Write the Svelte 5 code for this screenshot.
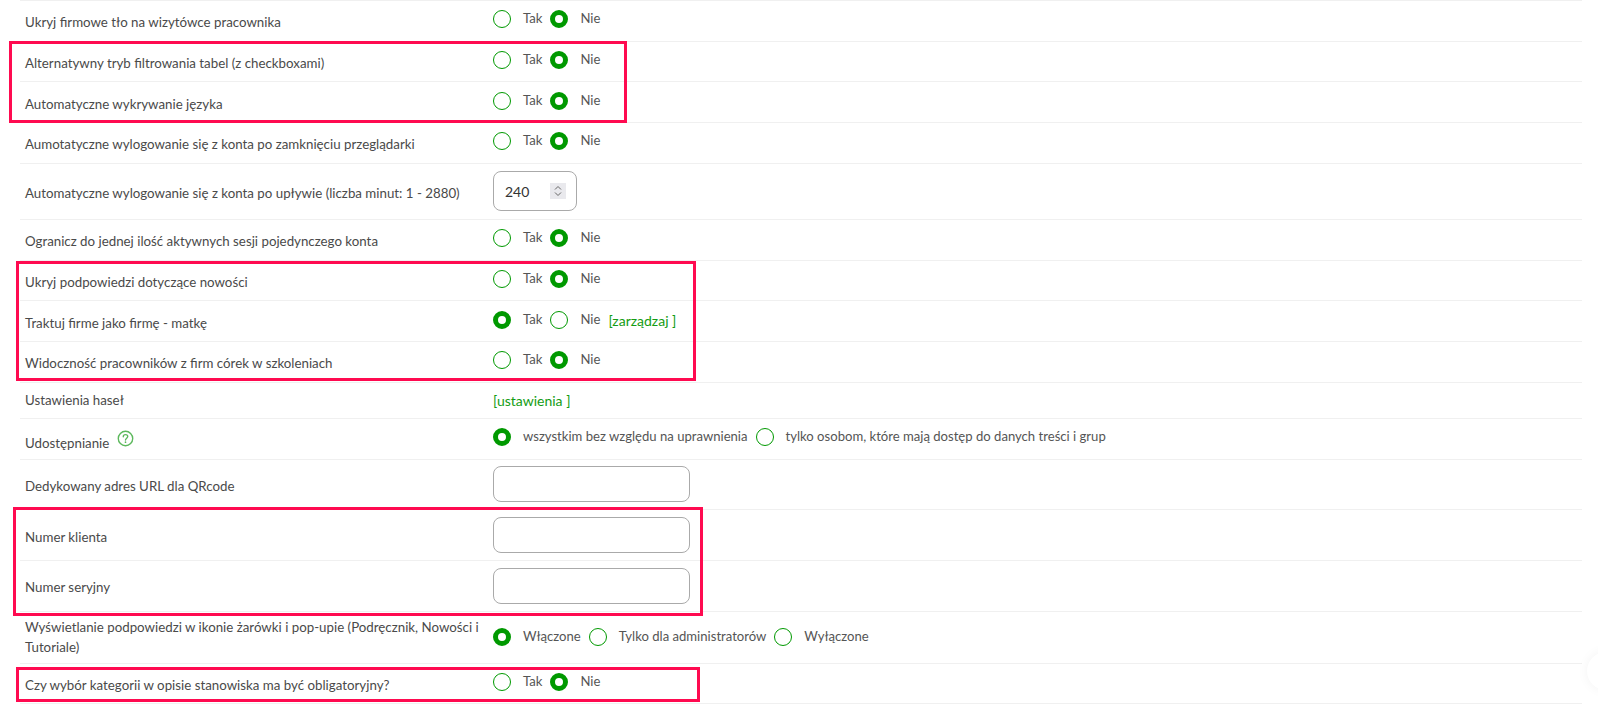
<script>
  const taknie = (sel = 1) => ({ type: 'radio', options: ['Tak', 'Nie'], sel });

  const rows = [
    { label: 'Ukryj firmowe tło na wizytówce pracownika', ...taknie() },
    { label: 'Alternatywny tryb filtrowania tabel (z checkboxami)', ...taknie() },
    { label: 'Automatyczne wykrywanie języka', ...taknie() },
    { label: 'Aumotatyczne wylogowanie się z konta po zamknięciu przeglądarki', ...taknie() },
    { label: 'Automatyczne wylogowanie się z konta po upływie (liczba minut: 1 - 2880)', type: 'number', value: '240' },
    { label: 'Ogranicz do jednej ilość aktywnych sesji pojedynczego konta', ...taknie() },
    { label: 'Ukryj podpowiedzi dotyczące nowości', ...taknie() },
    { label: 'Traktuj firme jako firmę - matkę', ...taknie(0), link: '[zarządzaj ]' },
    { label: 'Widoczność pracowników z firm córek w szkoleniach', ...taknie() },
    { label: 'Ustawienia haseł', type: 'link', link: '[ustawienia ]' },
    { label: 'Udostępnianie', help: true, type: 'radio', sel: 0, options: ['wszystkim bez względu na uprawnienia', 'tylko osobom, które mają dostęp do danych treści i grup'] },
    { label: 'Dedykowany adres URL dla QRcode', type: 'text' },
    { label: 'Numer klienta', type: 'text' },
    { label: 'Numer seryjny', type: 'text' },
    { label: 'Wyświetlanie podpowiedzi w ikonie żarówki i pop-upie (Podręcznik, Nowości i Tutoriale)', type: 'radio', sel: 0, tall: true, options: ['Włączone', 'Tylko dla administratorów', 'Wyłączone'] },
    { label: 'Czy wybór kategorii w opisie stanowiska ma być obligatoryjny?', ...taknie() }
  ];

  // red annotations drawn on top of the form
  const marks = [
    { x: 9, y: 41, w: 618, h: 82 },
    { x: 16, y: 261, w: 680, h: 120 },
    { x: 13, y: 507, w: 690, h: 109 },
    { x: 16, y: 667, w: 684, h: 35 }
  ];
</script>

<div class="page">
  <div class="list">
    {#each rows as row, i}
      <div class="row row-{row.type}" class:tall={row.tall} class:has-help={row.help}>
        <div class="label">
          {row.label}
          {#if row.help}
            <svg class="help" width="17" height="17" viewBox="0 0 16 16" fill="none">
              <circle cx="8" cy="8" r="6.8" stroke="#5cb85c" stroke-width="1.3" />
              <path d="M5.9 6.3c0-1.2 1-2 2.1-2s2.1.8 2.1 1.9c0 1.5-2.1 1.7-2.1 3.3" stroke="#5cb85c" stroke-width="1.3" stroke-linecap="round" />
              <circle cx="8" cy="11.5" r=".8" fill="#5cb85c" />
            </svg>
          {/if}
        </div>
        <div class="control">
          {#if row.type === 'radio'}
            {#each row.options as opt, j}
              <input type="radio" name={'r' + i} checked={row.sel === j} />
              <span class="opt">{opt}</span>
            {/each}
            {#if row.link}
              <a href="#top" class="link inline">{row.link}</a>
            {/if}
          {:else if row.type === 'number'}
            <div class="number">
              <span>{row.value}</span>
              <svg class="spin" width="16" height="16" viewBox="0 0 16 16">
                <rect width="16" height="16" fill="#e9e9ed" />
                <path d="M5 6.5l3-3 3 3M5 9.5l3 3 3-3" fill="none" stroke="#666" stroke-width="1" />
              </svg>
            </div>
          {:else if row.type === 'text'}
            <input class="text" type="text" />
          {:else if row.type === 'link'}
            <a href="#top" class="link">{row.link}</a>
          {/if}
        </div>
      </div>
    {/each}
  </div>

  {#each marks as m}
    <div class="mark" style="left:{m.x}px;top:{m.y}px;width:{m.w}px;height:{m.h}px"></div>
  {/each}

  <div class="fab"></div>
</div>

<style>
  :global(body) {
    margin: 0;
    background: #fff;
  }

  .page {
    position: relative;
    height: 704px;
    overflow: hidden;
    font-family: Lato, "Open Sans", sans-serif;
    font-size: 13.3px;
    color: #4a4a4a;
  }

  .list {
    margin: 0 16px 0 20px;
    border-top: 1px solid #f0f0f0;
  }

  .row {
    display: flex;
    align-items: center;
    box-sizing: border-box;
    height: 40.67px;
    padding-left: 5px;
    border-bottom: 1px solid #f0f0f0;
  }

  .row-number {
    height: 56.33px;
  }

  .row-link {
    height: 36.33px;
  }

  .row-text {
    height: 50.67px;
  }

  .row.tall {
    height: 52px;
  }

  .label {
    width: 468px;
    flex: none;
    line-height: 20px;
    padding-top: 3px;
  }

  .row-link .label,
  .row.tall .label {
    padding-top: 0;
  }

  .row.has-help .label {
    padding-top: 6px;
  }

  .help {
    margin-left: 4px;
    vertical-align: 1px;
  }

  .control {
    display: flex;
    align-items: center;
    margin-top: -3px;
  }

  .row-number .control,
  .row-text .control,
  .row-link .control {
    margin-top: 0;
  }

  .row.tall .control {
    margin-top: -1px;
  }

  input[type="radio"] {
    appearance: none;
    box-sizing: border-box;
    width: 18px;
    height: 18px;
    margin: 0;
    flex: none;
    border: 1px solid #009900;
    border-radius: 50%;
    background: #fff;
  }

  input[type="radio"]:checked {
    border: 5px solid #009900;
  }

  .opt {
    margin: -2px 8px 0 12px;
    font-size: 13.1px;
    color: #555;
  }

  .link {
    color: #139c13;
    font-size: 14px;
    text-decoration: none;
  }

  .link.inline {
    margin-top: 2px;
  }

  .number {
    display: flex;
    align-items: center;
    justify-content: space-between;
    box-sizing: border-box;
    width: 84px;
    height: 40px;
    padding: 0 10px 0 11px;
    border: 1px solid #aaa;
    border-radius: 8px;
    font-size: 14px;
    color: #333;
  }

  .text {
    box-sizing: border-box;
    width: 197px;
    height: 36px;
    padding: 0 10px;
    border: 1px solid #aaa;
    border-radius: 8px;
    background: #fff;
    outline: none;
  }

  .mark {
    position: absolute;
    box-sizing: border-box;
    border: 3px solid #ff0a50;
    pointer-events: none;
  }

  .fab {
    position: absolute;
    left: 1587px;
    top: 652px;
    width: 38px;
    height: 38px;
    border-radius: 50%;
    background: #fff;
    box-shadow: 0 0 12px rgba(0, 0, 0, 0.05);
  }
</style>
